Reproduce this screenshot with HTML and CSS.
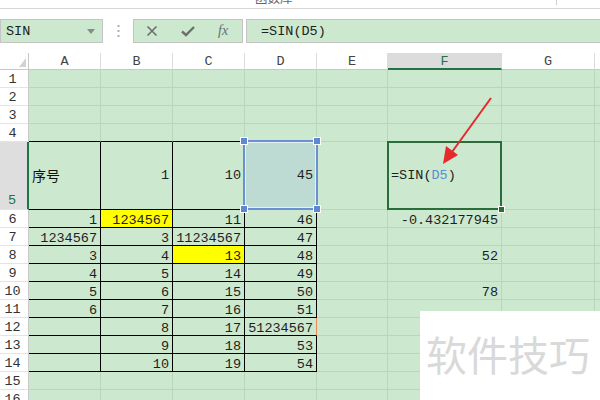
FILE: index.html
```html
<!DOCTYPE html>
<html lang="zh-CN">
<head>
  <meta charset="UTF-8" />
  <title>SIN</title>
  <link rel="stylesheet" href="styles.css">
</head>
<body>
  <div class="ribbon">
    <span class="ribbon-label">函数库</span>
    <span class="ribbon-sep"></span>
  </div>

  <div class="formula-bar">
    <div class="namebox">
      <span>SIN</span>
      <svg width="8" height="5" viewBox="0 0 8 5"><polygon points="0,0 8,0 4,5" fill="#8a8a8a"/></svg>
    </div>
    <div class="grip">
      <svg width="3" height="12" viewBox="0 0 3 12"><rect x="0.5" y="0" width="2" height="2" fill="#b0b0b0"/><rect x="0.5" y="5" width="2" height="2" fill="#b0b0b0"/><rect x="0.5" y="10" width="2" height="2" fill="#b0b0b0"/></svg>
    </div>
    <div class="fx-buttons">
      <svg width="12" height="12" viewBox="0 0 12 12"><path d="M1.5 1.5 L10.5 10.5 M10.5 1.5 L1.5 10.5" stroke="#6e6e6e" stroke-width="1.6"/></svg>
      <svg width="14" height="12" viewBox="0 0 14 12"><path d="M1 6.5 L5 10 L13 2" stroke="#6e6e6e" stroke-width="2.4" fill="none"/></svg>
      <span class="fx">fx</span>
    </div>
    <div class="formula">=SIN(D5)</div>
  </div>

  <div class="sheet">
    <div class="corner"><svg width="29" height="17" viewBox="0 0 29 17"><polygon points="26,5 26,14 19,14" fill="#d2d2d2"/></svg></div>
    <div class="ch">A</div><div class="ch">B</div><div class="ch">C</div><div class="ch">D</div>
    <div class="ch">E</div><div class="ch on">F</div><div class="ch">G</div><div class="ch"></div>

    <div class="rh">1</div>
    <div class="c"></div><div class="c"></div><div class="c"></div><div class="c"></div><div class="c"></div><div class="c"></div><div class="c"></div><div class="c"></div>
    <div class="rh">2</div>
    <div class="c"></div><div class="c"></div><div class="c"></div><div class="c"></div><div class="c"></div><div class="c"></div><div class="c"></div><div class="c"></div>
    <div class="rh">3</div>
    <div class="c"></div><div class="c"></div><div class="c"></div><div class="c"></div><div class="c"></div><div class="c"></div><div class="c"></div><div class="c"></div>
    <div class="rh">4</div>
    <div class="c bb"></div><div class="c bb"></div><div class="c bb"></div><div class="c bb"></div><div class="c"></div><div class="c"></div><div class="c"></div><div class="c"></div>

    <div class="rh on">5</div>
    <div class="c bx mid left cjk">序号</div>
    <div class="c bx mid">1</div>
    <div class="c bx mid">10</div>
    <div class="c bx mid pick">45
      <span class="pick-frame"></span>
      <span class="knob tl"></span><span class="knob tr"></span><span class="knob bl"></span><span class="knob br"></span>
    </div>
    <div class="c"></div>
    <div class="c mid left act">=SIN(<span class="ref">D5</span>)<span class="act-frame"></span><span class="act-knob"></span></div>
    <div class="c"></div><div class="c"></div>

    <div class="rh">6</div>
    <div class="c bx">1</div><div class="c bx y">1234567</div><div class="c bx">11</div><div class="c bx">46</div>
    <div class="c"></div><div class="c">-0.432177945</div><div class="c"></div><div class="c"></div>
    <div class="rh">7</div>
    <div class="c bx">1234567</div><div class="c bx">3</div><div class="c bx">11234567</div><div class="c bx">47</div>
    <div class="c"></div><div class="c"></div><div class="c"></div><div class="c"></div>
    <div class="rh">8</div>
    <div class="c bx">3</div><div class="c bx">4</div><div class="c bx y">13</div><div class="c bx">48</div>
    <div class="c"></div><div class="c">52</div><div class="c"></div><div class="c"></div>
    <div class="rh">9</div>
    <div class="c bx">4</div><div class="c bx">5</div><div class="c bx">14</div><div class="c bx">49</div>
    <div class="c"></div><div class="c"></div><div class="c"></div><div class="c"></div>
    <div class="rh">10</div>
    <div class="c bx">5</div><div class="c bx">6</div><div class="c bx">15</div><div class="c bx">50</div>
    <div class="c"></div><div class="c">78</div><div class="c"></div><div class="c"></div>
    <div class="rh">11</div>
    <div class="c bx">6</div><div class="c bx">7</div><div class="c bx">16</div><div class="c bx">51</div>
    <div class="c"></div><div class="c"></div><div class="c"></div><div class="c"></div>
    <div class="rh">12</div>
    <div class="c bx"></div><div class="c bx">8</div><div class="c bx">17</div><div class="c bx warn">51234567</div>
    <div class="c"></div><div class="c"></div><div class="c"></div><div class="c"></div>
    <div class="rh">13</div>
    <div class="c bx"></div><div class="c bx">9</div><div class="c bx">18</div><div class="c bx">53</div>
    <div class="c"></div><div class="c"></div><div class="c"></div><div class="c"></div>
    <div class="rh">14</div>
    <div class="c bx"></div><div class="c bx">10</div><div class="c bx">19</div><div class="c bx">54</div>
    <div class="c"></div><div class="c"></div><div class="c"></div><div class="c"></div>
    <div class="rh">15</div>
    <div class="c"></div><div class="c"></div><div class="c"></div><div class="c"></div><div class="c"></div><div class="c"></div><div class="c"></div><div class="c"></div>
    <div class="rh">16</div>
    <div class="c"></div><div class="c"></div><div class="c"></div><div class="c"></div><div class="c"></div><div class="c"></div><div class="c"></div><div class="c"></div>
  </div>

  <!-- annotation arrow pointing at the formula -->
  <svg class="arrow" width="600" height="400" viewBox="0 0 600 400">
    <line x1="491" y1="98" x2="452" y2="152" stroke="#e42a2a" stroke-width="2"/>
    <polygon points="443,164 458,155 446,146" fill="#e42a2a"/>
  </svg>

  <div class="watermark">软件技巧</div>
</body>
</html>
```

FILE: styles.css
```css
* {
  box-sizing: border-box;
}

body {
  margin: 0;
  width: 600px;
  height: 400px;
  overflow: hidden;
  position: relative;
  background: #fff;
  font-family: "Liberation Mono", "DejaVu Sans Mono", monospace;
  font-size: 13.5px;
  color: #1e1e1e;
}

.ribbon {
  height: 9px;
  border-bottom: 1px solid #d6d6d6;
  display: flex;
  align-items: flex-start;
  overflow: hidden;
}

.ribbon-label {
  margin-left: 255px;
  margin-top: -9px;
  font-family: "Noto Sans CJK SC", sans-serif;
  font-size: 12.5px;
  line-height: 14px;
  color: #666;
}

.ribbon-sep {
  margin-left: 263px;
  width: 1px;
  height: 5px;
  background: #cfcfcf;
}

.formula-bar {
  display: flex;
  height: 24px;
  margin-top: 10px;
}

.namebox {
  width: 103px;
  border: 1px solid #c4c4c4;
  background: #cce8cf;
  display: flex;
  align-items: center;
  justify-content: space-between;
  padding: 0 7px 0 5px;
}

.grip {
  width: 30px;
  display: flex;
  align-items: center;
  justify-content: center;
}

.fx-buttons {
  width: 110px;
  border: 1px solid #c4c4c4;
  background: #cce8cf;
  display: flex;
  align-items: center;
  gap: 23px;
  padding-left: 12px;
}

.fx {
  font-family: "Liberation Serif", serif;
  font-style: italic;
  font-size: 14px;
  color: #6e6e6e;
}

.formula {
  flex: 1;
  margin-left: 3px;
  border: 1px solid #c4c4c4;
  border-right: none;
  background: #cce8cf;
  display: flex;
  align-items: center;
  padding-left: 14px;
}

.sheet {
  margin-top: 10px;
  display: grid;
  grid-template-columns: 29px 72px 72px 72px 72px 71px 114px 93px 1fr;
  grid-template-rows: 17px repeat(4, 18px) 68px repeat(11, 18px);
}

.corner {
  background: #fff;
  border-right: 1px solid #c8c8c8;
  border-bottom: 1px solid #c8c8c8;
}

.corner svg {
  display: block;
}

.ch {
  background: #fff;
  border-right: 1px solid #dcdcdc;
  border-bottom: 1px solid #c8c8c8;
  text-align: center;
  line-height: 17px;
  color: #444;
}

.ch.on {
  background: #dcdcdc;
  border-bottom: 2px solid #217346;
  color: #217346;
}

.rh {
  background: #fff;
  border-right: 1px solid #c8c8c8;
  border-bottom: 1px solid #e4e4e4;
  display: flex;
  align-items: flex-end;
  justify-content: center;
  padding-right: 3px;
  line-height: 14px;
  color: #333;
}

.rh.on {
  background: #dedede;
  border-right: 2px solid #217346;
  color: #217346;
  padding-bottom: 1px;
}

.c {
  background: #cce8cf;
  border-right: 1px solid #b9d5bc;
  border-bottom: 1px solid #b9d5bc;
  display: flex;
  align-items: flex-end;
  justify-content: flex-end;
  padding: 0 3px;
  line-height: 13px;
  white-space: nowrap;
}

.bx {
  border-right-color: #000;
  border-bottom-color: #000;
}

.bb {
  border-bottom-color: #000;
}

.mid {
  align-items: center;
}

.left {
  justify-content: flex-start;
}

.y {
  background: #ffff00;
}

.warn {
  border-right-color: #ee8a55;
}

.cjk {
  font-family: "Noto Sans CJK SC", sans-serif;
  font-size: 14px;
  color: #111;
}

.pick {
  position: relative;
  background: #bddbd3;
}

.pick-frame {
  position: absolute;
  left: -2px;
  top: -2px;
  right: -2px;
  bottom: -1px;
  border: 2px solid #6a8fd5;
  box-shadow: inset 0 0 0 1px rgba(255, 255, 255, 0.6);
}

.knob {
  position: absolute;
  width: 6px;
  height: 6px;
  background: #5f88d2;
  outline: 1px solid #fff;
}

.knob.tl { left: -4px; top: -4px; }
.knob.tr { right: -4px; top: -4px; }
.knob.bl { left: -4px; bottom: -3px; }
.knob.br { right: -4px; bottom: -3px; }

.act {
  position: relative;
  padding-left: 3px;
}

.act-frame {
  position: absolute;
  left: -1px;
  top: -1px;
  right: -1px;
  bottom: -1px;
  border: 2px solid #2b6c3b;
}

.act-knob {
  position: absolute;
  right: -3px;
  bottom: -3px;
  width: 5px;
  height: 5px;
  background: #2b6c3b;
  outline: 1px solid #fff;
}

.ref {
  color: #5a8fd0;
}

.arrow {
  position: absolute;
  left: 0;
  top: 0;
  pointer-events: none;
}

.watermark {
  position: absolute;
  left: 420px;
  top: 311px;
  width: 180px;
  height: 89px;
  background: #fff;
  padding: 20px 0 0 6px;
  font-family: "Noto Sans CJK SC", sans-serif;
  font-size: 41px;
  line-height: 44px;
  color: #d9d9d9;
  white-space: nowrap;
}
```
